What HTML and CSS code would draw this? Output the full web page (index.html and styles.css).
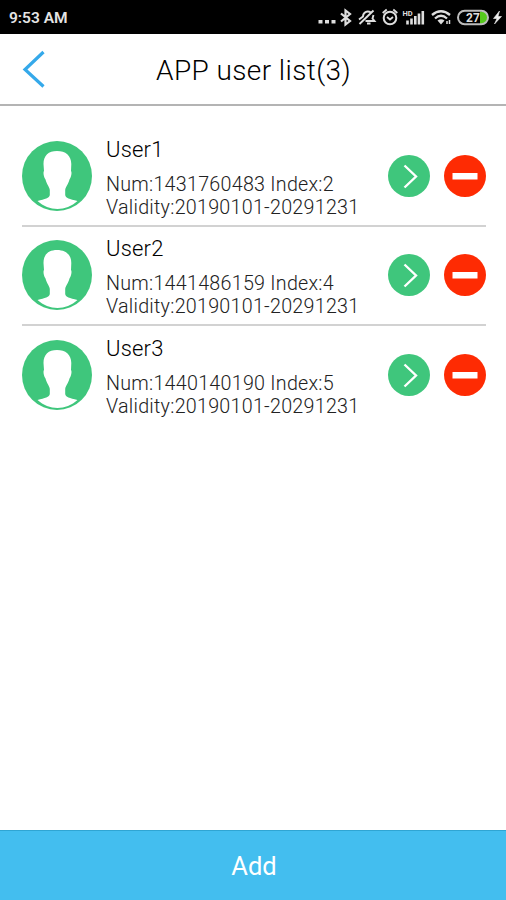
FILE: index.html
```html
<!DOCTYPE html>
<html lang="en">
<head>
<meta charset="utf-8">
<title>APP user list</title>
<link rel="stylesheet" href="styles.css">
</head>
<body>
<svg width="0" height="0" class="defs" aria-hidden="true">
  <symbol id="avatar" viewBox="0 0 70 70">
    <circle cx="35" cy="35" r="35" fill="#3fc67c"/>
    <path d="M35 10C26.500 10 21.500 14.500 21.500 23L22 30C21 31 21.500 36 23.500 38.500C24.500 43 27.500 46 27.800 49L27.800 54C27.500 57 23 58 15.500 60C27 70.500 44 70.500 55.500 60C47.500 58 43.500 57 43.200 54L43.200 49C43.500 46 46.500 43 47.500 38.500C49.500 36 50 31 49 30L49.300 23C49.300 14.500 43.500 10 35 10Z" fill="#fff"/>
  </symbol>
  <symbol id="go" viewBox="0 0 42 42">
    <circle cx="21" cy="21" r="21" fill="#3fc67c"/>
    <path d="M16.500 10.500L28 21.500L16.500 32.500" fill="none" stroke="#fff" stroke-width="2.400"/>
  </symbol>
  <symbol id="remove" viewBox="0 0 42 42">
    <circle cx="21" cy="21" r="21" fill="#fe2b03"/>
    <rect x="8.500" y="18" width="25" height="6.500" fill="#fff"/>
  </symbol>
</svg>
<div class="screen">
  <div class="status">
    <span class="clock">9:53 AM</span>
    <svg class="tray" width="188" height="34" viewBox="316 0 188 34" fill="none" stroke="#dedede" stroke-width="1.600">
      <path d="M318.500 21.700h4M325 21.700h4M331.500 21.700h4" stroke-width="3.600"/>
      <path d="M341 13.500L350 21L345.500 24.500V10.500L350 14L341 21.500" stroke-width="2.200"/>
      <path d="M359 19.500L363 16.500C363 12.500 367 10 371 12.500M373.500 15L372.500 18.500L374.500 21H365.500M367 23.500h3.500M359.500 24L373.500 10.500" stroke-width="1.900"/>
      <circle cx="390" cy="18" r="6.300" stroke-width="2"/>
      <path d="M387 17l3 2.500l3-2.500M382.700 13l4-3.500M397.300 13l-4-3.500" stroke-width="1.800"/>
      <path d="M407.500 24.500v-4M411.500 24.500v-6M415.300 24.500v-8.500M419 24.500V13.500M422.800 24.500V11" stroke-width="2.600"/>
      <text x="402.500" y="15.500" class="hd">HD</text>
      <path d="M432 15Q441 7.500 450 15M435 18.500Q441 13 447 18.500" stroke-width="2.300"/>
      <path d="M437.500 20.500Q441 18 444.500 20.500L441 24.500Z" fill="#dedede" stroke="none"/>
      <path d="M447 24v-3M449.500 24v-4" stroke-width="1.500"/>
      <path d="M480 11.500h2a6.200 6.200 0 0 1 0 12.400h-2z" fill="#55c91c" stroke="none"/>
      <rect x="458" y="10.800" width="30" height="13.400" rx="6.700" stroke-width="2" stroke="#bdbdbd"/>
      <text x="466" y="22" class="charge">27</text>
      <path d="M499.500 11L493.500 18.500H497L494.500 24L501.500 16.500H498Z" fill="#eee" stroke="#eee" stroke-width=".6"/>
    </svg>
  </div>
  <header class="header">
    <svg class="back" width="24" height="38" viewBox="0 0 24 38"><path d="M21.500 2L3 19.500L21.500 36.500" fill="none" stroke="#35a9ea" stroke-width="3.200"/></svg>
    <h1 class="title">APP user list(3)</h1>
  </header>
  <main class="list">
    <div class="row">
      <svg class="avatar"><use href="#avatar"/></svg>
      <div class="info"><div class="name">User1</div><div class="detail">Num:1431760483 Index:2</div><div class="detail">Validity:20190101-20291231</div></div>
      <svg class="action"><use href="#go"/></svg>
      <svg class="action"><use href="#remove"/></svg>
    </div>
    <div class="row">
      <svg class="avatar"><use href="#avatar"/></svg>
      <div class="info"><div class="name">User2</div><div class="detail">Num:1441486159 Index:4</div><div class="detail">Validity:20190101-20291231</div></div>
      <svg class="action"><use href="#go"/></svg>
      <svg class="action"><use href="#remove"/></svg>
    </div>
    <div class="row">
      <svg class="avatar"><use href="#avatar"/></svg>
      <div class="info"><div class="name">User3</div><div class="detail">Num:1440140190 Index:5</div><div class="detail">Validity:20190101-20291231</div></div>
      <svg class="action"><use href="#go"/></svg>
      <svg class="action"><use href="#remove"/></svg>
    </div>
  </main>
  <div class="add">Add</div>
</div>
</body>
</html>
```
FILE: styles.css
```css
* { box-sizing: border-box; }
body { margin: 0; background: #fff; font-family: Roboto, "Liberation Sans", sans-serif; }
.defs { position: absolute; }
.screen { display: flex; flex-direction: column; width: 506px; height: 900px; overflow: hidden; }
.status { display: flex; align-items: center; justify-content: space-between; height: 34px; flex: none; padding: 0 2px 0 9px; background: #000; color: #e4e4e4; }
.clock { font-size: 15.500px; font-weight: 600; line-height: 34px; padding-top: 2px; }
.hd { font-size: 7.500px; font-weight: 700; fill: #dedede; stroke: none; }
.charge { font-size: 12px; font-weight: 700; fill: #dedede; stroke: none; }
.header { display: flex; align-items: center; height: 72px; flex: none; padding: 0 22px; border-bottom: 2px solid #b4b4b4; }
.back { flex: none; }
.title { flex: 1; margin: 3px 23px 0 0; text-align: center; font-size: 28px; font-weight: 300; letter-spacing: 0.400px; line-height: 36px; color: #000; white-space: nowrap; }
.list { flex: 1; padding: 21.400px 20px 0 22px; }
.row { display: flex; align-items: center; height: 99.400px; border-bottom: 2px solid #d2d2d2; }
.row:last-child { border-bottom-color: transparent; }
.avatar { width: 70px; height: 70px; flex: none; }
.info { flex: 1; margin-left: 14px; padding-top: 3px; white-space: nowrap; }
.name { font-size: 22px; font-weight: 300; line-height: 28px; letter-spacing: 0.200px; color: #000; margin-bottom: 9px; }
.detail { font-size: 19.700px; font-weight: 300; line-height: 23px; letter-spacing: 0.260px; color: #222; }
.action { width: 42px; height: 42px; flex: none; }
.action + .action { margin-left: 14.500px; }
.add { flex: none; height: 70px; border-top: 1px solid #2fa5d3; background: #43beef; color: #fff; text-align: center; font-size: 25.500px; font-weight: 400; line-height: 71px; padding-left: 2px; }
```
